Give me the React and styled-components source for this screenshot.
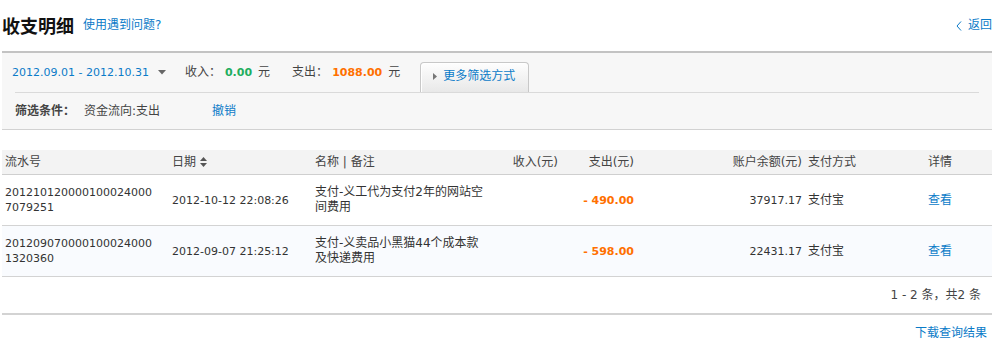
import React from "react";
import styled, { createGlobalStyle } from "styled-components";

const BLUE = "#0b7bc8";

const GlobalStyle = createGlobalStyle`
  html, body { margin: 0; padding: 0; background: #fff; }
  body {
    font-family: "DejaVu Sans", "Noto Sans CJK SC", sans-serif;
    font-size: 12px;
    line-height: 15px;
    color: #333;
  }
  a { text-decoration: none; color: ${BLUE}; cursor: pointer; }
`;

const Page = styled.div`
  width: 990px;
  margin-left: 2px;
`;

const Header = styled.header`
  height: 51px;
  display: flex;
  align-items: center;
`;

const Title = styled.h1`
  margin: 0 0 2px 0;
  font-family: "Noto Sans CJK SC", sans-serif;
  font-size: 18px;
  line-height: 20px;
  font-weight: 700;
  color: #111;
`;

const HelpLink = styled.a`
  margin-left: 9px;
  font-size: 12px;
`;

const BackLink = styled.a`
  margin-left: auto;
  display: flex;
  align-items: center;
  gap: 6px;
  font-size: 12px;
`;

const FilterPanel = styled.section`
  border-top: 2px solid #c3c3c3;
  border-bottom: 1px solid #d2d2d2;
  background: #f7f7f7;
`;

const SummaryBar = styled.div`
  box-sizing: border-box;
  height: 40px;
  padding: 0 0 1px 10px;
  margin-right: 13px;
  display: flex;
  align-items: center;
  background: linear-gradient(#dadada, #dadada) no-repeat right bottom / calc(100% - 13px) 1px;
`;

const DateRange = styled.a`
  font-size: 11px;
  display: flex;
  align-items: center;
`;

const Caret = styled.svg`
  margin-left: 9px;
`;

const StatLabel = styled.span`
  margin-left: ${(p) => p.$gap}px;
  color: #444;
`;

const Amount = styled.span`
  margin: 0 6px 0 4px;
  font-size: 11px;
  font-weight: 700;
  color: ${(p) => p.$color};
`;

const Unit = styled.span`
  color: #444;
`;

const MoreTab = styled.button`
  align-self: flex-end;
  box-sizing: border-box;
  margin-left: 20px;
  width: 109px;
  height: 30px;
  padding: 6px 0 0 12px;
  display: flex;
  align-items: flex-start;
  gap: 6px;
  border: 1px solid #c8c8c8;
  border-bottom: none;
  border-radius: 4px 4px 0 0;
  background: linear-gradient(#fefefe, #e8e8e8);
  box-shadow: inset 1px 1px 0 #fff;
  font: inherit;
  font-size: 12px;
  color: ${BLUE};
  cursor: pointer;
  svg { margin-top: 4px; }
`;

const ConditionRow = styled.div`
  height: 36px;
  padding-left: 13px;
  display: flex;
  align-items: center;
`;

const CondLabel = styled.span`
  font-weight: 700;
  color: #444;
`;

const CondValue = styled.span`
  margin-left: 9px;
  color: #444;
`;

const UndoLink = styled.a`
  margin-left: 52px;
`;

const Table = styled.table`
  margin-top: 20px;
  width: 990px;
  table-layout: fixed;
  border-collapse: collapse;
`;

const HeadRow = styled.tr`
  background: #f3f3f3;
  border-bottom: 1px solid #cfcfcf;
`;

const Th = styled.th`
  height: 24px;
  padding: 0 ${(p) => p.$pr || 0}px 0 ${(p) => p.$pl || 0}px;
  text-align: ${(p) => p.$align || "left"};
  font-weight: 400;
  font-size: 12px;
  color: #444;
  white-space: nowrap;
`;

const Row = styled.tr`
  background: ${(p) => (p.$alt ? "#f9fbfe" : "#fff")};
  border-bottom: 1px solid #d3d3d3;
`;

const Td = styled.td`
  height: 50px;
  padding: 0 ${(p) => p.$pr || 0}px 0 ${(p) => p.$pl || 0}px;
  text-align: ${(p) => p.$align || "left"};
  vertical-align: middle;
  font-size: ${(p) => (p.$num ? 11 : 12)}px;
  color: #333;
  word-break: ${(p) => (p.$breakAll ? "break-all" : "normal")};
`;

const OutAmount = styled.span`
  font-weight: 700;
  color: #ff7000;
`;

const SortIcon = styled.svg`
  margin-left: 4px;
  vertical-align: -1px;
`;

const Pager = styled.div`
  height: 36px;
  padding-right: 11px;
  display: flex;
  align-items: center;
  justify-content: flex-end;
  border-bottom: 2px solid #d3d3d3;
  color: #444;
`;

const Footer = styled.div`
  padding: 11px 5px 0 0;
  display: flex;
  justify-content: flex-end;
`;

const cols = [167, 143, 190, 60, 76, 168, 119, 67];

const rows = [
  {
    serial: "2012101200001000240007079251",
    date: "2012-10-12 22:08:26",
    name: "支付-义工代为支付2年的网站空间费用",
    out: "- 490.00",
    balance: "37917.17",
  },
  {
    serial: "2012090700001000240001320360",
    date: "2012-09-07 21:25:12",
    name: "支付-义卖品小黑猫44个成本款及快递费用",
    out: "- 598.00",
    balance: "22431.17",
  },
];

export default function App() {
  return (
    <Page>
      <GlobalStyle />
      <Header>
        <Title>收支明细</Title>
        <HelpLink>使用遇到问题?</HelpLink>
        <BackLink>
          <svg width="6" height="10" viewBox="0 0 6 10">
            <path d="M5 0.5 L1 5 L5 9.5" fill="none" stroke={BLUE} strokeWidth="1" />
          </svg>
          返回
        </BackLink>
      </Header>

      <FilterPanel>
        <SummaryBar>
          <DateRange>
            2012.09.01 - 2012.10.31
            <Caret width="8" height="5" viewBox="0 0 8 5">
              <path d="M0 0 H8 L4 4.5 Z" fill="#666" />
            </Caret>
          </DateRange>
          <StatLabel $gap={19}>收入：</StatLabel>
          <Amount $color="#1fae5e">0.00</Amount>
          <Unit>元</Unit>
          <StatLabel $gap={22}>支出：</StatLabel>
          <Amount $color="#ff7000">1088.00</Amount>
          <Unit>元</Unit>
          <MoreTab>
            <svg width="4" height="7" viewBox="0 0 4 7">
              <path d="M0 0 L4 3.5 L0 7 Z" fill="#777" />
            </svg>
            更多筛选方式
          </MoreTab>
        </SummaryBar>
        <ConditionRow>
          <CondLabel>筛选条件：</CondLabel>
          <CondValue>资金流向:支出</CondValue>
          <UndoLink>撤销</UndoLink>
        </ConditionRow>
      </FilterPanel>

      <Table>
        <colgroup>
          {cols.map((w, i) => (
            <col key={i} style={{ width: w }} />
          ))}
        </colgroup>
        <thead>
          <HeadRow>
            <Th $pl={3}>流水号</Th>
            <Th $pl={3}>
              日期
              <SortIcon width="7" height="10" viewBox="0 0 7 10">
                <path d="M0 4 L3.5 0 L7 4 Z M0 6 L3.5 10 L7 6 Z" fill="#555" />
              </SortIcon>
            </Th>
            <Th $pl={3}>名称 | 备注</Th>
            <Th $align="right" $pr={4}>收入(元)</Th>
            <Th $align="right" $pr={4}>支出(元)</Th>
            <Th $align="right" $pr={4}>账户余额(元)</Th>
            <Th $pl={2}>支付方式</Th>
            <Th $pl={3}>详情</Th>
          </HeadRow>
        </thead>
        <tbody>
          {rows.map((r, i) => (
            <Row key={r.serial} $alt={i % 2 === 1}>
              <Td $num $breakAll $pl={3} $pr={15}>{r.serial}</Td>
              <Td $num $pl={3}>{r.date}</Td>
              <Td $pl={3} $pr={15}>{r.name}</Td>
              <Td $align="right" $pr={4}></Td>
              <Td $num $align="right" $pr={4}>
                <OutAmount>{r.out}</OutAmount>
              </Td>
              <Td $num $align="right" $pr={4}>{r.balance}</Td>
              <Td $pl={2}>支付宝</Td>
              <Td $pl={3}>
                <a>查看</a>
              </Td>
            </Row>
          ))}
        </tbody>
      </Table>
      <Pager>1 - 2 条，共2 条</Pager>
      <Footer>
        <a>下载查询结果</a>
      </Footer>
    </Page>
  );
}
